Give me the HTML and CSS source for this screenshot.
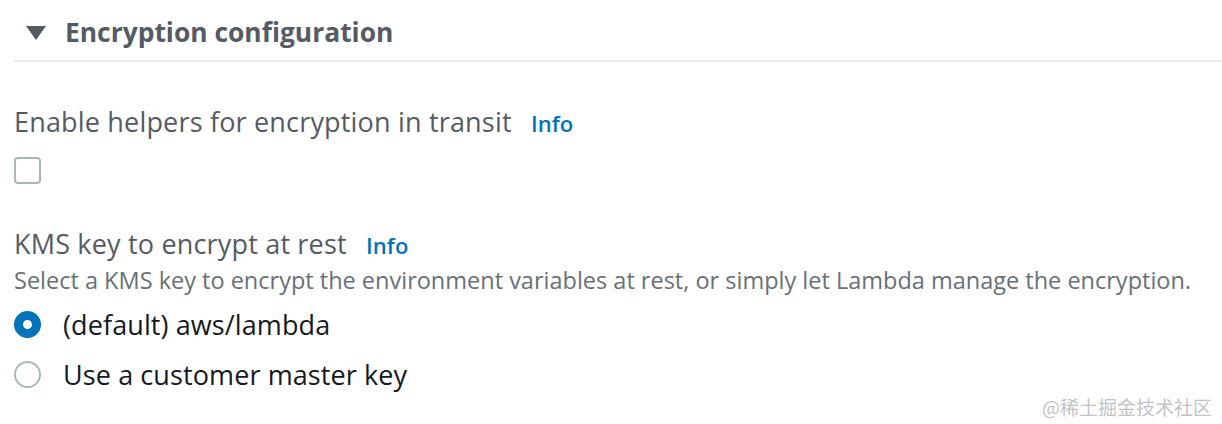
FILE: index.html
```html
<!DOCTYPE html>
<html>
<head>
<meta charset="utf-8">
<link rel="stylesheet" href="styles.css">
</head>
<body>
<div class="page">
  <div class="section-header">
    <span class="caret"></span>
    <h2 class="title">Encryption configuration</h2>
  </div>
  <div class="content">
    <div class="field field-transit">
      <div class="label">Enable helpers for encryption in transit <a class="info">Info</a></div>
      <span class="checkbox"></span>
    </div>
    <div class="field field-kms">
      <div class="label">KMS key to encrypt at rest <a class="info">Info</a></div>
      <div class="desc">Select a KMS key to encrypt the environment variables at rest, or simply let Lambda manage the encryption.</div>
      <div class="radios">
        <div class="radio-row"><span class="radio radio-on"></span><span class="radio-label">(default) aws/lambda</span></div>
        <div class="radio-row"><span class="radio"></span><span class="radio-label">Use a customer master key</span></div>
      </div>
    </div>
  </div>
  <div class="watermark">@稀土掘金技术社区</div>
</div>
</body>
</html>
```
FILE: styles.css
```css
html, body {
  margin: 0;
  padding: 0;
  background: #ffffff;
}
.page {
  position: relative;
  width: 1222px;
  height: 424px;
  overflow: hidden;
  font-family: "Open Sans", "Noto Sans", sans-serif;
  color: #545b64;
}
.section-header {
  margin-left: 14px;
  height: 56px;
  padding-top: 4px;
  border-bottom: 2px solid #eaeded;
  display: flex;
  align-items: center;
  padding-left: 12px;
}
.caret {
  width: 0;
  height: 0;
  border-left: 10px solid transparent;
  border-right: 10px solid transparent;
  border-top: 14px solid #545b64;
  margin-right: 19px;
  margin-top: 2px;
}
.title {
  margin: 0;
  font-size: 26.4px;
  font-weight: 700;
  line-height: 36px;
  color: #545b64;
}
.content {
  padding-left: 14px;
  display: flex;
  flex-direction: column;
}
.field-transit {
  margin-top: 42px;
}
.label {
  font-size: 27px;
  letter-spacing: 0.18px;
  line-height: 36px;
  color: #545b64;
}
.info {
  font-size: 22px;
  font-weight: 600;
  letter-spacing: 0.1px;
  color: #0073bb;
  margin-left: 12px;
}
.checkbox {
  display: block;
  width: 23px;
  height: 23px;
  border: 2px solid #aab7b8;
  border-radius: 4px;
  margin-top: 16px;
}
.field-kms {
  margin-top: 42px;
}
.desc {
  margin-top: 2px;
  font-size: 23.5px;
  line-height: 30px;
  color: #687078;
}
.radios {
  margin-top: 9px;
  display: flex;
  flex-direction: column;
  gap: 10px;
}
.radio-row {
  display: flex;
  align-items: center;
  height: 40px;
}
.radio {
  width: 23px;
  height: 23px;
  border: 2px solid #aab7b8;
  border-radius: 50%;
  box-sizing: content-box;
  margin-right: 22px;
  background: #fff;
}
.radio-on {
  width: 9px;
  height: 9px;
  border: 9px solid #0073bb;
}
.radio-label {
  font-size: 27px;
  letter-spacing: 0.1px;
  color: #16191f;
}
.watermark {
  position: absolute;
  right: 10px;
  bottom: 4px;
  font-family: "Noto Sans CJK SC", sans-serif;
  font-size: 19px;
  color: #c0c4c8;
}
```
